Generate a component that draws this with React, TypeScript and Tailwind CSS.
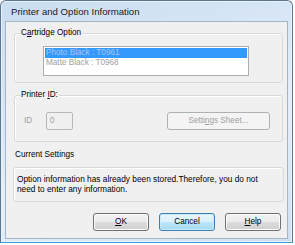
import React from 'react';

const font = { fontFamily: '"Liberation Sans", Arial, sans-serif' };

const GroupBox = ({ label, className, children }: { label: React.ReactNode; className: string; children?: React.ReactNode }) => (
  <div className={`relative rounded-[3px] border border-[#d5dadf] shadow-[inset_1px_1px_0_#ffffff] ${className}`}>
    <span className="absolute -top-[6px] left-[5px] bg-[#f0f0f0] px-[1px] text-[8.2px] leading-[10px] text-black">
      {label}
    </span>
    {children}
  </div>
);

const Button = ({ children, primary = false }: { children: React.ReactNode; primary?: boolean }) => (
  <div
    className={`flex h-[18px] w-[56px] items-center justify-center rounded-[3px] border text-[8.2px] text-black ${
      primary
        ? 'border-[#3c7fb1] bg-[linear-gradient(#eaf6fd_0%,#d9f0fc_50%,#bee6fd_50%,#a7d9f5_100%)] shadow-[inset_0_0_0_1px_#c7eafd]'
        : 'border-[#707070] bg-[linear-gradient(#f2f2f2_0%,#ebebeb_50%,#dddddd_50%,#cfcfcf_100%)] shadow-[inset_0_0_0_1px_#fcfcfc]'
    }`}
  >
    {children}
  </div>
);

export default function App() {
  return (
    <div className="h-[245px] w-[295px] bg-white" style={font}>
      <div className="flex h-[243px] w-[293px] flex-col rounded-t-[6px] border border-[#5d7690] border-b-[#3aa2d8] bg-[linear-gradient(160deg,#c9ddf1_0%,#dbe8f6_40%,#e6eff9_60%,#cfe0f2_100%)] px-[4px] pb-[3px] shadow-[inset_0_0_0_1px_#e9f2fb]">
        <div className="flex h-[20px] shrink-0 items-center pl-[6px] pt-[2px] text-[9.6px] text-[#1a1a1a]">
          Printer and Option Information
        </div>
        <div className="flex-1 border border-[#a4b5c6] bg-[#f0f0f0]">
          <GroupBox
            label={<>C<span className="underline">a</span>rtridge Option</>}
            className="ml-[8px] mt-[11px] h-[50px] w-[269px] pl-[28px] pt-[12px]"
          >
            <div className="h-[30px] w-[206px] border border-[#abadb3] bg-white p-[1px] text-[8.2px] leading-[10px]">
              <div className="bg-[#3399ff] pl-[1px] text-[#a8c6ee]">Photo Black : T0961</div>
              <div className="pl-[1px] text-[#a0a0a0]">Matte Black : T0968</div>
            </div>
          </GroupBox>

          <GroupBox
            label={<>Printer <span className="underline">I</span>D:</>}
            className="ml-[8px] mt-[12px] h-[47px] w-[269px] pt-[16px]"
          >
            <div className="flex items-center">
              <span className="ml-[9px] w-[22px] text-[8.2px] text-[#a0a0a0]">ID</span>
              <div className="flex h-[18px] w-[27px] items-center rounded-[2px] border border-[#b5b9bd] bg-[#f0f0f0] pl-[3px] text-[8.2px] text-[#a0a0a0]">
                0
              </div>
              <div className="ml-[94px] flex h-[18px] w-[103px] items-center justify-center rounded-[3px] border border-[#adb2b5] bg-[#f4f4f4] text-[8.2px] text-[#a0a0a0]">
                Setti<span className="underline">n</span>gs Sheet...
              </div>
            </div>
          </GroupBox>

          <div className="ml-[9px] mt-[8px] text-[8.2px] leading-[10px] text-black">Current Settings</div>

          <div className="ml-[7px] mt-[7px] h-[35px] w-[271px] rounded-[3px] border border-[#d5dadf] pl-[3px] pt-[6px] text-[8.3px] leading-[10px] text-black shadow-[inset_1px_1px_0_#ffffff]">
            Option information has already been stored.Therefore, you do not
            <br />
            need to enter any information.
          </div>

          <div className="mr-[6px] mt-[11px] flex justify-end gap-[10px]">
            <Button>
              <span className="underline">O</span>K
            </Button>
            <Button primary>Cancel</Button>
            <Button>
              <span className="underline">H</span>elp
            </Button>
          </div>
        </div>
      </div>
    </div>
  );
}
